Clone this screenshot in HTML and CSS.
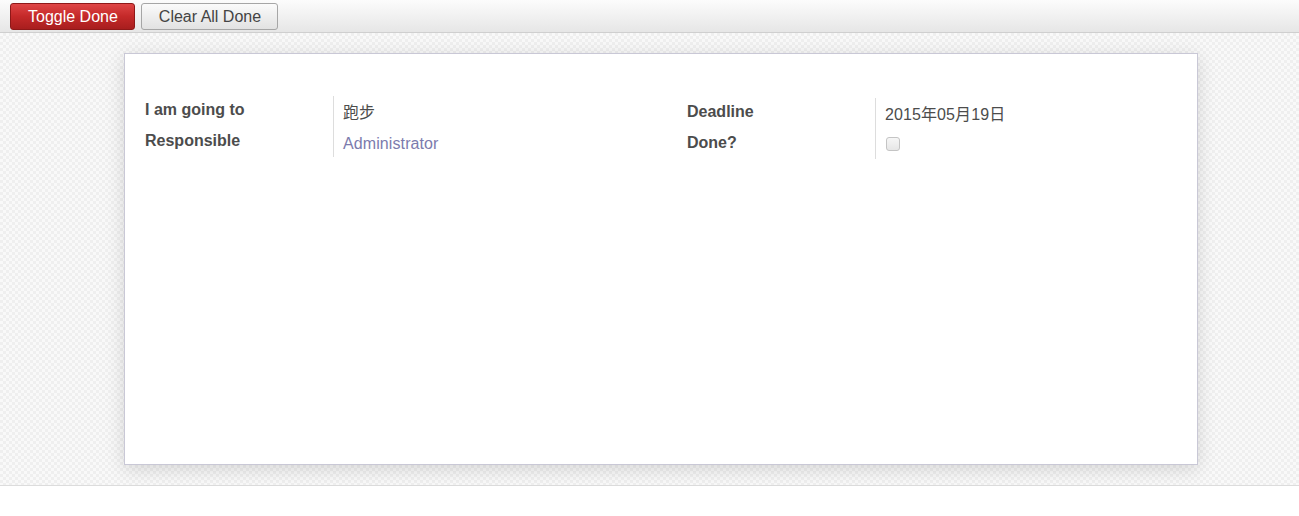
FILE: index.html
```html
<!DOCTYPE html>
<html>
<head>
<meta charset="utf-8">
<link rel="stylesheet" href="styles.css">
</head>
<body>
<div class="toolbar">
  <button class="btn btn-primary">Toggle Done</button>
  <button class="btn btn-default">Clear All Done</button>
</div>
<div class="sheet-bg">
  <div class="sheet">
    <div class="groups">
      <div class="group">
        <div class="labels">
          <div class="label">I am going to</div>
          <div class="label">Responsible</div>
        </div>
        <div class="values">
          <div class="value cjk">跑步</div>
          <div class="value link">Administrator</div>
        </div>
      </div>
      <div class="group group-right">
        <div class="labels">
          <div class="label">Deadline</div>
          <div class="label">Done?</div>
        </div>
        <div class="values">
          <div class="value cjk">2015年05月19日</div>
          <div class="value"><span class="checkbox"></span></div>
        </div>
      </div>
    </div>
  </div>
</div>
</body>
</html>
```
FILE: styles.css
```css
html, body {
  margin: 0;
  padding: 0;
  background: #ffffff;
  font-family: "Liberation Sans", "Noto Sans CJK SC", sans-serif;
  font-size: 16px;
  color: #4c4c4c;
}

.toolbar {
  display: flex;
  gap: 6px;
  padding: 3px 10px 2px;
  background: linear-gradient(to bottom, #fcfcfc 0%, #e6e6e6 100%);
  border-bottom: 1px solid #cfcfcf;
}

.btn {
  height: 27px;
  padding: 0 16px 0 17px;
  font-family: "Liberation Sans", sans-serif;
  font-size: 16px;
  border-radius: 3px;
  line-height: 25px;
  cursor: pointer;
}

.btn-primary {
  color: #ffffff;
  background: linear-gradient(to bottom, #de4545 0%, #c42929 50%, #a81e1e 100%);
  border: 1px solid #8e1818;
}

.btn-default {
  color: #444444;
  background: linear-gradient(to bottom, #fbfbfb 0%, #eeeeee 50%, #e2e2e2 100%);
  border: 1px solid #a6a6a6;
}

.sheet-bg {
  padding: 20px 101px 20px 124px;
  background-color: #f4f4f4;
  background-image: repeating-conic-gradient(#efefef 0% 25%, #f9f9f9 0% 50%);
  background-size: 6px 6px;
  border-bottom: 1px solid #dcdcdc;
}

.sheet {
  height: 412px;
  box-sizing: border-box;
  background: #ffffff;
  border: 1px solid #c9c8d6;
  box-shadow: 0 4px 18px rgba(0, 0, 0, 0.14);
  padding: 40px 20px 0 20px;
}

.groups {
  display: grid;
  grid-template-columns: 542px 1fr;
}

.group {
  display: grid;
  grid-template-columns: 188px 1fr;
}

.group-right {
  margin-top: 2px;
}

.label {
  font-weight: bold;
  line-height: 31px;
  height: 31px;
}

.values {
  margin-top: 2px;
  border-left: 1px solid #dddddd;
  padding-left: 9px;
  padding-top: 1px;
  height: 60px;
}

.value {
  line-height: 31px;
  height: 31px;
  display: flex;
  align-items: center;
  letter-spacing: 0.1px;
}

.cjk {
  font-family: "Liberation Sans", "Noto Sans CJK SC", sans-serif;
}

.link {
  color: #7c7bad;
}

.checkbox {
  display: inline-block;
  width: 12px;
  height: 12px;
  margin-left: 1px;
  margin-top: -4px;
  border: 1px solid #c4c4c4;
  border-radius: 3px;
  background: linear-gradient(to bottom, #f6f6f6, #e6e6e6);
}
```
